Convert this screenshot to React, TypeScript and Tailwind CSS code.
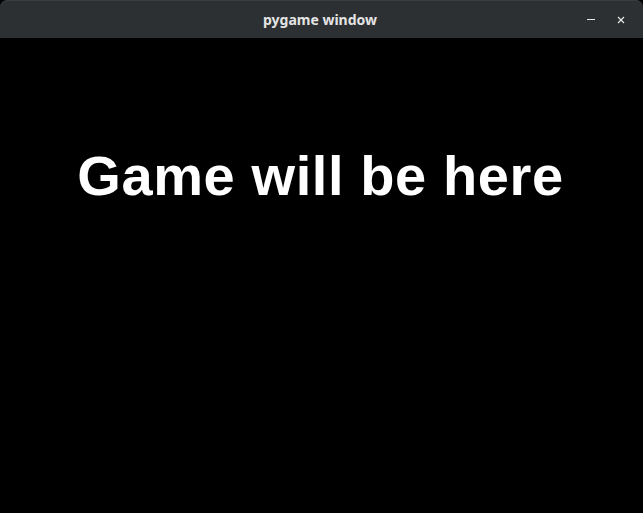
import React from 'react';

const App: React.FC = () => {
  return (
    <div className="w-[643px] h-[513px] bg-black flex flex-col overflow-hidden">
      <div className="h-[38px] shrink-0 bg-[#2c3033] rounded-t-[7px] border-t border-[#3a3e41] relative flex items-center justify-center">
        <span
          className="text-[14px] font-bold text-[#e4e4e4] pr-[3px]"
          style={{ fontFamily: '"Noto Sans", "DejaVu Sans", sans-serif' }}
        >
          pygame window
        </span>
        <div className="absolute right-0 top-0 h-full flex items-center gap-[22px] pr-[18px]">
          <div className="w-[8px] h-[1px] bg-[#e8e8e8]" />
          <svg width="8" height="8" viewBox="0 0 8 8" className="text-[#e8e8e8]">
            <path d="M1 1 L7 7 M7 1 L1 7" stroke="currentColor" strokeWidth="1.2" />
          </svg>
        </div>
      </div>
      <div className="flex-1 bg-black flex justify-center pt-[110px]">
        <h1
          className="text-white font-bold text-[56px] leading-none tracking-[0.6px] pr-[2px]"
          style={{ fontFamily: '"Liberation Sans", Arial, sans-serif' }}
        >
          Game will be here
        </h1>
      </div>
    </div>
  );
};

export default App;
